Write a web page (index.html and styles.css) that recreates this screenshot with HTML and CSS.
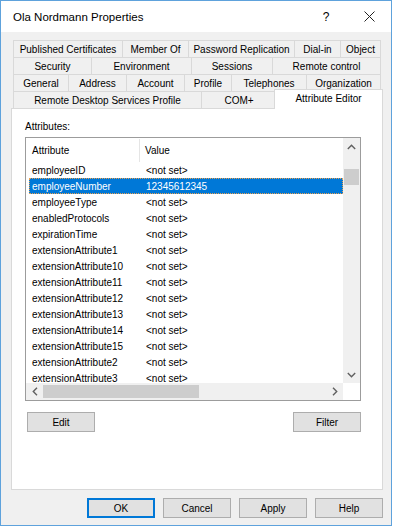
FILE: index.html
```html
<!DOCTYPE html>
<html>
<head>
<meta charset="utf-8">
<link rel="stylesheet" href="styles.css">
</head>
<body>
<div class="window">
  <div class="titlebar">
    <span class="title">Ola Nordmann Properties</span>
    <span class="help">?</span>
    <span class="close"><svg width="11" height="11" viewBox="0 0 11 11"><path d="M0.5 0.5 L10.5 10.5 M10.5 0.5 L0.5 10.5" stroke="#222" stroke-width="1" fill="none"/></svg></span>
  </div>
  <div class="client">
    <div class="tabs">
      <div class="tabrow row1">
        <div class="tab">Published Certificates</div>
        <div class="tab">Member Of</div>
        <div class="tab">Password Replication</div>
        <div class="tab">Dial-in</div>
        <div class="tab">Object</div>
      </div>
      <div class="tabrow row2">
        <div class="tab">Security</div>
        <div class="tab">Environment</div>
        <div class="tab">Sessions</div>
        <div class="tab">Remote control</div>
      </div>
      <div class="tabrow row3">
        <div class="tab">General</div>
        <div class="tab">Address</div>
        <div class="tab">Account</div>
        <div class="tab">Profile</div>
        <div class="tab">Telephones</div>
        <div class="tab">Organization</div>
      </div>
      <div class="tabrow row4">
        <div class="tab">Remote Desktop Services Profile</div>
        <div class="tab">COM+</div>
        <div class="tab selected">Attribute Editor</div>
      </div>
    </div>
    <div class="panel">
      <div class="label">Attributes:</div>
      <div class="listbox">
        <div class="listmain">
          <div class="listcontent">
            <div class="header">
              <div class="hcol1">Attribute</div>
              <div class="hcol2">Value</div>
            </div>
            <div class="row"><span class="c1">employeeID</span><span class="c2">&lt;not set&gt;</span></div>
            <div class="row sel"><span class="c1">employeeNumber</span><span class="c2">12345612345</span></div>
            <div class="row"><span class="c1">employeeType</span><span class="c2">&lt;not set&gt;</span></div>
            <div class="row"><span class="c1">enabledProtocols</span><span class="c2">&lt;not set&gt;</span></div>
            <div class="row"><span class="c1">expirationTime</span><span class="c2">&lt;not set&gt;</span></div>
            <div class="row"><span class="c1">extensionAttribute1</span><span class="c2">&lt;not set&gt;</span></div>
            <div class="row"><span class="c1">extensionAttribute10</span><span class="c2">&lt;not set&gt;</span></div>
            <div class="row"><span class="c1">extensionAttribute11</span><span class="c2">&lt;not set&gt;</span></div>
            <div class="row"><span class="c1">extensionAttribute12</span><span class="c2">&lt;not set&gt;</span></div>
            <div class="row"><span class="c1">extensionAttribute13</span><span class="c2">&lt;not set&gt;</span></div>
            <div class="row"><span class="c1">extensionAttribute14</span><span class="c2">&lt;not set&gt;</span></div>
            <div class="row"><span class="c1">extensionAttribute15</span><span class="c2">&lt;not set&gt;</span></div>
            <div class="row"><span class="c1">extensionAttribute2</span><span class="c2">&lt;not set&gt;</span></div>
            <div class="row"><span class="c1">extensionAttribute3</span><span class="c2">&lt;not set&gt;</span></div>
          </div>
          <div class="vscroll">
            <div class="arrow"><svg width="9" height="6" viewBox="0 0 9 6"><path d="M0.8 5 L4.5 1.3 L8.2 5" stroke="#606060" stroke-width="1.4" fill="none"/></svg></div>
            <div class="vtrack"><div class="vthumb"></div></div>
            <div class="arrow"><svg width="9" height="6" viewBox="0 0 9 6"><path d="M0.8 1 L4.5 4.7 L8.2 1" stroke="#606060" stroke-width="1.4" fill="none"/></svg></div>
          </div>
        </div>
        <div class="listbottom">
          <div class="hscroll">
            <div class="harrow"><svg width="6" height="9" viewBox="0 0 6 9"><path d="M5 0.8 L1.3 4.5 L5 8.2" stroke="#606060" stroke-width="1.4" fill="none"/></svg></div>
            <div class="htrack"><div class="hthumb"></div></div>
            <div class="harrow"><svg width="6" height="9" viewBox="0 0 6 9"><path d="M1 0.8 L4.7 4.5 L1 8.2" stroke="#606060" stroke-width="1.4" fill="none"/></svg></div>
          </div>
          <div class="corner"></div>
        </div>
      </div>
      <div class="panelbuttons">
        <button class="btn">Edit</button>
        <button class="btn">Filter</button>
      </div>
    </div>
    <div class="dialogbuttons">
      <button class="btn default">OK</button>
      <button class="btn">Cancel</button>
      <button class="btn">Apply</button>
      <button class="btn">Help</button>
    </div>
  </div>
</div>
</body>
</html>
```

FILE: styles.css
```css
* { box-sizing: border-box; }
html, body { margin: 0; padding: 0; background: #ffffff; }
body {
  font-family: "Liberation Sans", Arial, sans-serif;
  font-size: 10px;
  color: #000;
}
.window {
  width: 392px;
  height: 526px;
  border: 1px solid #5ea2dc;
  display: flex;
  flex-direction: column;
  background: #f0f0f0;
}
.titlebar {
  height: 31px;
  background: #ffffff;
  display: flex;
  align-items: center;
  padding-left: 12px;
  flex: none;
}
.title { font-size: 11.5px; flex: 1; color: #000; }
.help { font-size: 12px; width: 16px; margin-right: 30px; text-align: center; }
.close { width: 11px; height: 11px; margin-right: 16px; display: flex; }
.client {
  flex: 1;
  padding: 8px 8px 0 10px;
  display: flex;
  flex-direction: column;
}
.tabs { margin: 0 3px 0 2px; display: flex; flex-direction: column; }
.tabrow {
  display: grid;
  height: 17px;
}
.row1 { grid-template-columns: 109px 66px 106px 46px 41px; }
.row2 { grid-template-columns: 78px 100px 81px 109px; }
.row3 { grid-template-columns: 55px 58px 58px 47px 75px 75px; }
.row4 { grid-template-columns: 188px 75px 105px; }
.tab {
  border-top: 1px solid #d9d9d9;
  border-left: 1px solid #d9d9d9;
  display: flex;
  align-items: center;
  justify-content: center;
  white-space: nowrap;
  background: #f0f0f0;
}
.tab:last-child { border-right: 1px solid #d9d9d9; }
.tab.selected {
  position: relative;
  z-index: 1;
  margin: -2px -2px -1px -2px;
  background: #ffffff;
  padding-bottom: 2px;
}
.panel {
  background: #ffffff;
  border: 1px solid #d9d9d9;
  height: 382px;
  padding: 11px 0 0 13px;
  display: flex;
  flex-direction: column;
}
.label { height: 14px; line-height: 14px; margin-bottom: 3px; }
.listbox {
  width: 336px;
  height: 264px;
  border: 1px solid #9c9c9c;
  display: flex;
  flex-direction: column;
  background: #fff;
}
.listmain { flex: 1; display: flex; min-height: 0; }
.listcontent { flex: 1; overflow: hidden; }
.header { height: 24px; display: flex; align-items: center; }
.hcol1 { width: 114px; padding-left: 6px; border-right: 1px solid #e5e5e5; height: 23px; line-height: 23px; }
.hcol2 { padding-left: 5px; }
.row { height: 16px; display: flex; align-items: center; margin-left: 3px; }
.row .c1 { width: 111px; padding-left: 3px; }
.row .c2 { padding-left: 6px; }
.row.sel { background: #0078d7; color: #fff; outline: 1px dotted #e8a050; outline-offset: -1px; }
.vscroll { width: 17px; background: #f0f0f0; display: flex; flex-direction: column; }
.arrow { height: 17px; display: flex; align-items: center; justify-content: center; }
.vtrack { flex: 1; padding: 14px 1px 0 1px; }
.vthumb { height: 16px; background: #cdcdcd; }
.listbottom { height: 17px; display: flex; flex: none; }
.hscroll { flex: 1; background: #f0f0f0; display: flex; }
.harrow { width: 17px; display: flex; align-items: center; justify-content: center; }
.htrack { flex: 1; padding: 2px 0 2px 0; }
.hthumb { width: 156px; height: 100%; background: #cdcdcd; }
.corner { width: 17px; background: #fff; }
.panelbuttons {
  display: flex;
  justify-content: space-between;
  width: 336px;
  margin-top: 11px;
  padding-left: 2px;
}
.btn {
  font-family: "Liberation Sans", Arial, sans-serif;
  font-size: 10px;
  width: 68px;
  height: 20px;
  background: #e1e1e1;
  border: 1px solid #adadad;
  padding: 0;
  color: #000;
}
.btn.default { border: 1px solid #0078d7; box-shadow: inset 0 0 0 1px #0078d7; }
.dialogbuttons {
  display: flex;
  justify-content: flex-end;
  gap: 8px;
  margin-top: 8px;
}
```
